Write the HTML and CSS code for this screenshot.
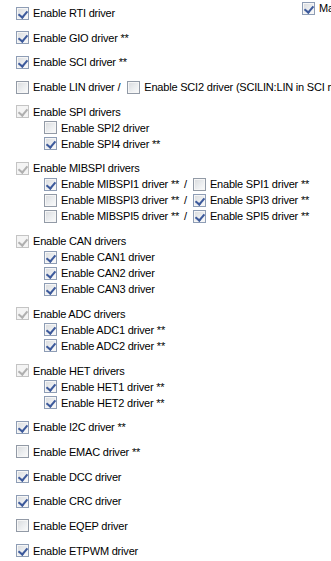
FILE: index.html
```html
<!DOCTYPE html>
<html lang="en">

<head>
    <meta charset="UTF-8">
    <title>Drivers</title>
    <link rel="stylesheet" href="styles.css">
</head>

<body>

    <div class="form">
        <div class="corner"><span class="cb on"></span>Manual</div>

        <div class="list">
            <div class="row"><span class="cb on"></span>Enable RTI driver</div>
            <div class="row"><span class="cb on"></span>Enable GIO driver **</div>
            <div class="row"><span class="cb on"></span>Enable SCI driver **</div>
            <div class="row">
                <span class="cb"></span>Enable LIN driver /
                <span class="cb next"></span>Enable SCI2 driver (SCILIN:LIN in SCI mode)
            </div>

            <div class="group">
                <div class="row"><span class="cb on dis"></span>Enable SPI drivers</div>
                <div class="sub">
                    <div class="row"><span class="cb"></span>Enable SPI2 driver</div>
                    <div class="row"><span class="cb on"></span>Enable SPI4 driver **</div>
                </div>
            </div>

            <div class="group">
                <div class="row"><span class="cb on dis"></span>Enable MIBSPI drivers</div>
                <div class="sub">
                    <div class="row">
                        <span class="cb on"></span>Enable MIBSPI1 driver ** <span class="slash">/</span>
                        <span class="cb"></span>Enable SPI1 driver **
                    </div>
                    <div class="row">
                        <span class="cb"></span>Enable MIBSPI3 driver ** <span class="slash">/</span>
                        <span class="cb on"></span>Enable SPI3 driver **
                    </div>
                    <div class="row">
                        <span class="cb"></span>Enable MIBSPI5 driver ** <span class="slash">/</span>
                        <span class="cb on"></span>Enable SPI5 driver **
                    </div>
                </div>
            </div>

            <div class="group">
                <div class="row"><span class="cb on dis"></span>Enable CAN drivers</div>
                <div class="sub">
                    <div class="row"><span class="cb on"></span>Enable CAN1 driver</div>
                    <div class="row"><span class="cb on"></span>Enable CAN2 driver</div>
                    <div class="row"><span class="cb on"></span>Enable CAN3 driver</div>
                </div>
            </div>

            <div class="group">
                <div class="row"><span class="cb on dis"></span>Enable ADC drivers</div>
                <div class="sub">
                    <div class="row"><span class="cb on"></span>Enable ADC1 driver **</div>
                    <div class="row"><span class="cb on"></span>Enable ADC2 driver **</div>
                </div>
            </div>

            <div class="group">
                <div class="row"><span class="cb on dis"></span>Enable HET drivers</div>
                <div class="sub">
                    <div class="row"><span class="cb on"></span>Enable HET1 driver **</div>
                    <div class="row"><span class="cb on"></span>Enable HET2 driver **</div>
                </div>
            </div>

            <div class="row"><span class="cb on"></span>Enable I2C driver **</div>
            <div class="row"><span class="cb"></span>Enable EMAC driver **</div>
            <div class="row"><span class="cb on"></span>Enable DCC driver</div>
            <div class="row"><span class="cb on"></span>Enable CRC driver</div>
            <div class="row"><span class="cb"></span>Enable EQEP driver</div>
            <div class="row"><span class="cb on"></span>Enable ETPWM driver</div>
        </div>
    </div>

</body>

</html>
```

FILE: styles.css
```css
* {
    margin: 0;
    padding: 0;
    box-sizing: border-box;
}

body {
    background: #fff;
    color: #000;
    font-family: "Liberation Sans", Arial, sans-serif;
    font-size: 11px;
    letter-spacing: -0.2px;
    overflow: hidden;
}

.form {
    position: relative;
    width: 331px;
    height: 561px;
    overflow: hidden;
}

.list {
    display: flex;
    flex-direction: column;
    gap: 8.7px;
    padding: 5px 0 0 16px;
}

.row {
    display: flex;
    align-items: center;
    height: 16px;
    white-space: nowrap;
}

.sub {
    padding-left: 28px;
}

/* checkbox */
.cb {
    position: relative;
    flex: none;
    width: 13px;
    height: 13px;
    margin-right: 4px;
    border: 1px solid #929aa6;
    background: linear-gradient(135deg, #d8dadd 0%, #eceef0 55%, #fbfbfb 100%);
    box-shadow: inset 0 0 0 1px #f6f6f6;
}

.cb.on {
    border-color: #8e9db5;
}

.cb.on::after {
    content: "";
    position: absolute;
    left: 3px;
    top: 1px;
    width: 4px;
    height: 7px;
    border: solid #3d5a9c;
    border-width: 0 2px 2px 0;
    transform: rotate(40deg);
}

.cb.dis {
    border-color: #c4c4c4;
    background: #f4f4f4;
    box-shadow: none;
}

.cb.dis::after {
    border-color: #b0b0b0;
}

.cb.next {
    margin-left: 7px;
}

.slash {
    margin: 0 6px 0 5px;
}

/* control sitting at top right of the panel */
.corner {
    position: absolute;
    left: 302px;
    top: 1px;
    display: flex;
    align-items: center;
    height: 14px;
    white-space: nowrap;
}
```
